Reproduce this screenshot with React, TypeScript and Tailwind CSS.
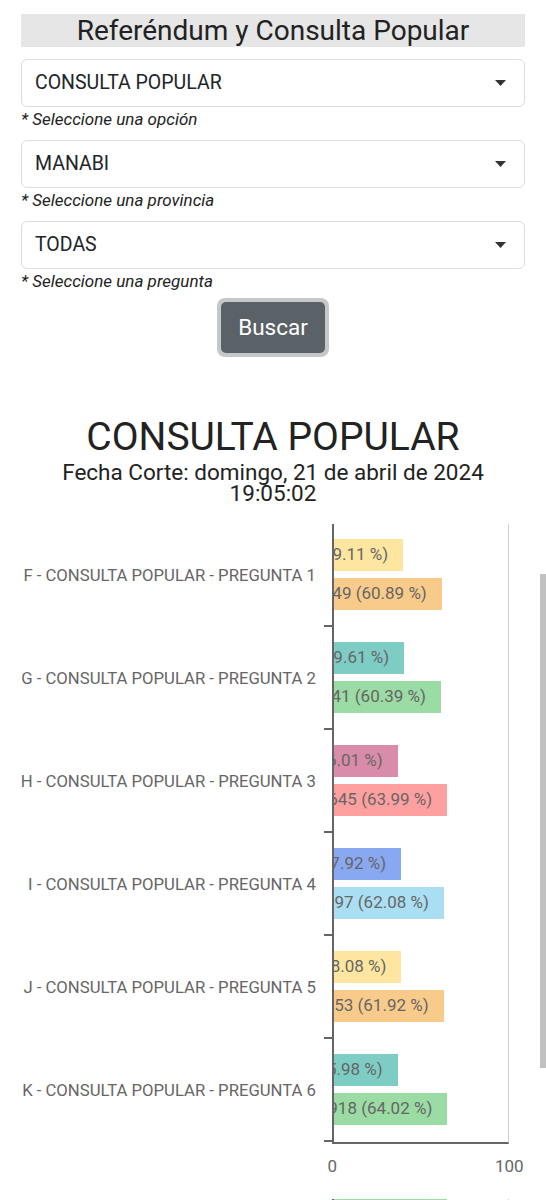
import React from "react";

type Bar = { pct: number; text: string; color: string };
type Group = { label: string; bars: [Bar, Bar] };

const PLOT_W = 177;

const groups: Group[] = [
  {
    label: "F - CONSULTA POPULAR - PREGUNTA 1",
    bars: [
      { pct: 39.11, text: "186213 (39.11 %)", color: "#fee6a0" },
      { pct: 60.89, text: "289949 (60.89 %)", color: "#f9cb8b" },
    ],
  },
  {
    label: "G - CONSULTA POPULAR - PREGUNTA 2",
    bars: [
      { pct: 39.61, text: "188412 (39.61 %)", color: "#7ecdc5" },
      { pct: 60.39, text: "287241 (60.39 %)", color: "#9bdba4" },
    ],
  },
  {
    label: "H - CONSULTA POPULAR - PREGUNTA 3",
    bars: [
      { pct: 36.01, text: "171281 (36.01 %)", color: "#d98ca9" },
      { pct: 63.99, text: "304645 (63.99 %)", color: "#ffa0a0" },
    ],
  },
  {
    label: "I - CONSULTA POPULAR - PREGUNTA 4",
    bars: [
      { pct: 37.92, text: "180336 (37.92 %)", color: "#88a9f1" },
      { pct: 62.08, text: "295397 (62.08 %)", color: "#aadff3" },
    ],
  },
  {
    label: "J - CONSULTA POPULAR - PREGUNTA 5",
    bars: [
      { pct: 38.08, text: "181144 (38.08 %)", color: "#fee6a0" },
      { pct: 61.92, text: "294553 (61.92 %)", color: "#f9cb8b" },
    ],
  },
  {
    label: "K - CONSULTA POPULAR - PREGUNTA 6",
    bars: [
      { pct: 35.98, text: "171102 (35.98 %)", color: "#7ecdc5" },
      { pct: 64.02, text: "304918 (64.02 %)", color: "#9bdba4" },
    ],
  },
];

function Select({ value }: { value: string }) {
  return (
    <div className="flex h-[48px] items-center justify-between rounded-[6px] border border-[#dedede] bg-white pl-[13px] pr-[18px]">
      <span className="text-[19.5px] text-[#212529]">{value}</span>
      <svg width="11" height="6" viewBox="0 0 11 6">
        <path d="M0 0 H11 L5.5 6 Z" fill="#333" />
      </svg>
    </div>
  );
}

function Helper({ children }: { children: React.ReactNode }) {
  return <p className="h-[25px] text-[17px] italic leading-[25px] text-[#222]">{children}</p>;
}

function BarRow({ bar }: { bar: Bar }) {
  return (
    <div
      className="flex h-[32px] items-center justify-end overflow-hidden whitespace-nowrap pr-[15px] text-[17px] text-[#666]"
      style={{ width: (bar.pct / 100) * PLOT_W, backgroundColor: bar.color }}
    >
      {bar.text}
    </div>
  );
}

export default function App() {
  return (
    <div className="relative min-h-[1200px] overflow-hidden bg-white px-[21px] pt-[14px] font-['Roboto',sans-serif]">
      <h1 className="h-[33px] bg-[#e6e6e6] text-center text-[28px] leading-[33px] text-[#222]">
        Referéndum y Consulta Popular
      </h1>

      <div className="mt-[12px]">
        <Select value="CONSULTA POPULAR" />
        <Helper>* Seleccione una opción</Helper>
      </div>
      <div className="mt-[8px]">
        <Select value="MANABI" />
        <Helper>* Seleccione una provincia</Helper>
      </div>
      <div className="mt-[8px]">
        <Select value="TODAS" />
        <Helper>* Seleccione una pregunta</Helper>
      </div>

      <div className="mt-[4px] flex justify-center">
        <button className="h-[59px] w-[112px] rounded-[8px] bg-[#c5c7c9] p-[4px]">
          <span className="flex h-full w-full items-center justify-center rounded-[5px] bg-[#5a6167] text-[22.5px] text-white">
            Buscar
          </span>
        </button>
      </div>

      <h2 className="mt-[58px] text-center text-[39px] leading-[44px] text-[#222]">CONSULTA POPULAR</h2>
      <p className="mt-[3px] text-center text-[22.5px] leading-[21px] text-[#222]">
        Fecha Corte: domingo, 21 de abril de 2024
        <br />
        19:05:02
      </p>

      <div className="-mx-[21px] mt-[20px] flex">
        <div className="w-[332px] shrink-0">
          {groups.map((g) => (
            <div key={g.label} className="relative flex h-[103px] items-center justify-end pr-[16px]">
              <span className="whitespace-nowrap text-[16.7px] text-[#666]">{g.label}</span>
              <span className="absolute bottom-0 right-0 h-[2px] w-[8px] bg-[#666]" />
            </div>
          ))}
        </div>
        <div className="w-[177px] shrink-0 border-r border-b-2 border-l-2 border-r-[#d0d0d0] border-b-[#666] border-l-[#666]">
          {groups.map((g) => (
            <div key={g.label} className="flex h-[103px] flex-col gap-[7px] pt-[15px]">
              <BarRow bar={g.bars[0]} />
              <BarRow bar={g.bars[1]} />
            </div>
          ))}
        </div>
      </div>

      <div className="-mx-[21px] mt-[11px] flex h-[22px] text-[17px] leading-[22px] text-[#666]">
        <span className="w-[332px] shrink-0 text-right">
          <span className="mr-[-5px]">0</span>
        </span>
        <span className="ml-[163px]">100</span>
      </div>

      <div className="-mx-[21px] mt-[22px] flex">
        <div className="w-[332px] shrink-0" />
        <div className="h-[40px] w-[177px] shrink-0 border-r border-l-2 border-r-[#d0d0d0] border-l-[#666]">
          <div className="h-[32px] bg-[#9bdba4]" style={{ width: 0.6402 * PLOT_W }} />
        </div>
      </div>

      <div className="absolute right-0 top-[574px] h-[494px] w-[6px] bg-[#c1c1c1]" />
    </div>
  );
}
